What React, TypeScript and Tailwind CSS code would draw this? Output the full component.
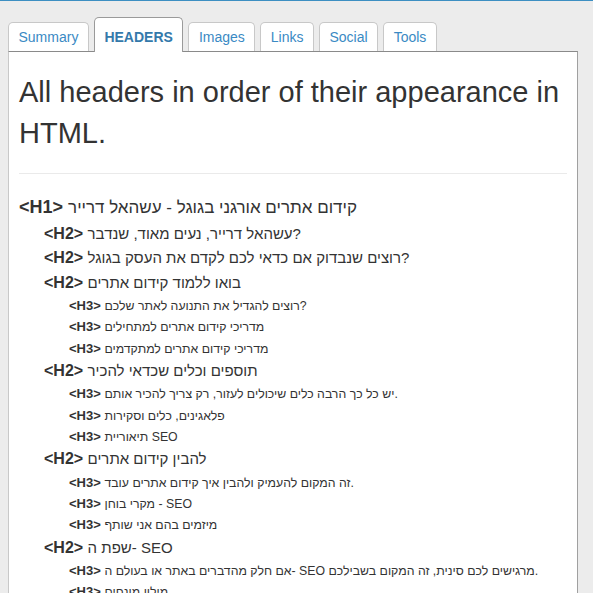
import React from "react";

type Item = { level: 1 | 2 | 3; text: string };

const items: Item[] = [
  { level: 1, text: "קידום אתרים אורגני בגוגל - עשהאל דרייר" },
  { level: 2, text: "עשהאל דרייר, נעים מאוד, שנדבר?" },
  { level: 2, text: "רוצים שנבדוק אם כדאי לכם לקדם את העסק בגוגל?" },
  { level: 2, text: "בואו ללמוד קידום אתרים" },
  { level: 3, text: "רוצים להגדיל את התנועה לאתר שלכם?" },
  { level: 3, text: "מדריכי קידום אתרים למתחילים" },
  { level: 3, text: "מדריכי קידום אתרים למתקדמים" },
  { level: 2, text: "תוספים וכלים שכדאי להכיר" },
  { level: 3, text: "יש כל כך הרבה כלים שיכולים לעזור, רק צריך להכיר אותם." },
  { level: 3, text: "פלאגינים, כלים וסקירות" },
  { level: 3, text: "תיאוריית SEO" },
  { level: 2, text: "להבין קידום אתרים" },
  { level: 3, text: "זה המקום להעמיק ולהבין איך קידום אתרים עובד." },
  { level: 3, text: "מקרי בוחן - SEO" },
  { level: 3, text: "מיזמים בהם אני שותף" },
  { level: 2, text: "שפת ה- SEO" },
  { level: 3, text: "אם חלק מהדברים באתר או בעולם ה- SEO מרגישים לכם סינית, זה המקום בשבילכם." },
  { level: 3, text: "מילון מונחים" },
];

const tabs = ["Summary", "HEADERS", "Images", "Links", "Social", "Tools"];

function Row({ item }: { item: Item }) {
  if (item.level === 1) {
    return (
      <div className="h-[27.5px] text-[18px] leading-[27.5px] whitespace-nowrap">
        <b>&lt;H1&gt;</b> <span className="text-[17px] leading-[20px]">{item.text}</span>
      </div>
    );
  }
  if (item.level === 2) {
    return (
      <div className="h-[24.5px] pl-[25px] text-[16px] leading-[24.5px] whitespace-nowrap">
        <b>&lt;H2&gt;</b> <span className="text-[15px] leading-[18px]">{item.text}</span>
      </div>
    );
  }
  return (
    <div className="h-[21.3px] pl-[50px] text-[13px] leading-[21.3px] whitespace-nowrap">
      <b>&lt;H3&gt;</b> <span className="text-[12.3px] leading-[15px]">{item.text}</span>
    </div>
  );
}

export default function App() {
  return (
    <div
      className="w-[593px] h-[593px] overflow-hidden bg-[#ececec] text-[#333]"
      style={{ fontFamily: '"Liberation Sans", Arial, sans-serif' }}
    >
      <div className="h-px bg-[#3d8fc2]" />
      <div className="pl-[8px] pr-[15px] pt-[16px]">
        <div className="flex items-end gap-[5px]">
          {tabs.map((t) =>
            t === "HEADERS" ? (
              <div
                key={t}
                className="relative z-10 -mb-px h-[35px] pt-[5px] pb-px px-[9.5px] bg-white border border-b-0 border-[#9a9a9a] rounded-t-[5px] flex items-center text-[14px] font-bold text-[#3479ab]"
              >
                {t}
              </div>
            ) : (
              <div
                key={t}
                className="h-[29px] px-[9.5px] bg-white border border-b-0 border-[#c8c8c8] rounded-t-[5px] flex items-center text-[14px] text-[#3a8ac4]"
              >
                {t}
              </div>
            )
          )}
        </div>
        <div className="bg-white border-t border-t-[#8a8a8a] border-l border-l-[#c8c8c8] border-r border-r-[#a0a0a0] px-[10px] h-[600px]">
          <div className="mt-[20px] text-[29px] leading-[41px] text-[#333]">
            All headers in order of their appearance in HTML.
          </div>
          <div className="mt-[19px] h-px bg-[#eaeaea]" />
          <div className="mt-[20px] text-[#333]">
            {items.map((it, i) => (
              <Row key={i} item={it} />
            ))}
          </div>
        </div>
      </div>
    </div>
  );
}
